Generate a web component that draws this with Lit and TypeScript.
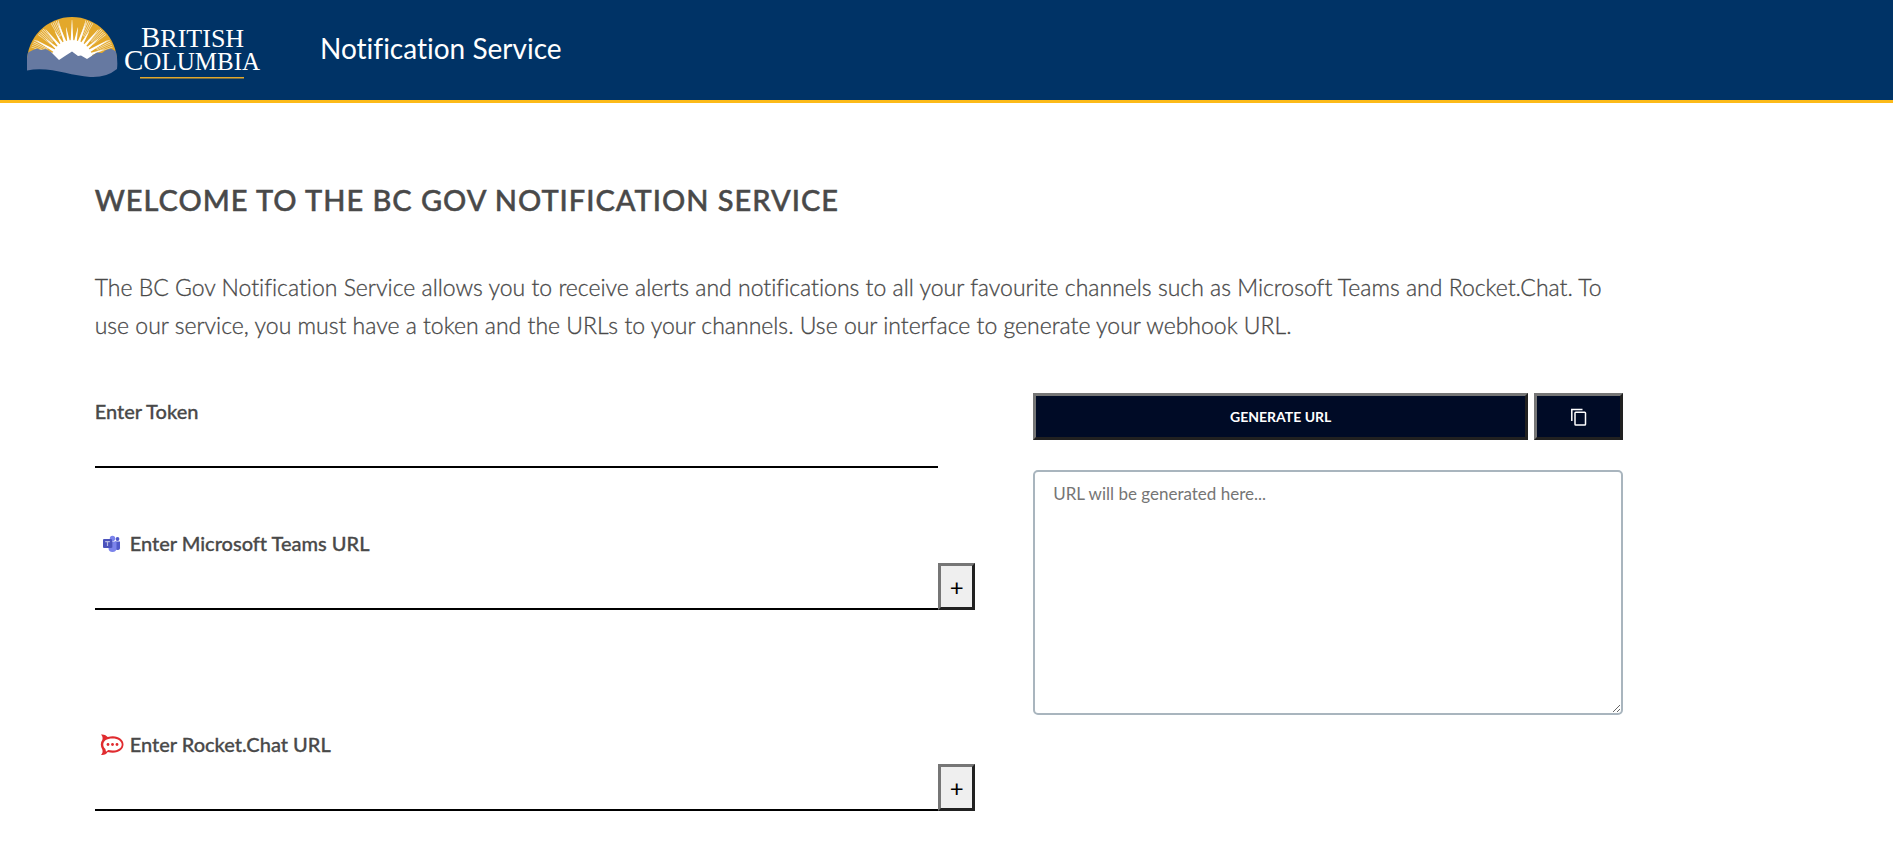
import { LitElement, html, svg, css } from "lit";
import { customElement, property, state } from "lit/decorators.js";

/** Thin wedge between an inner and an outer radius around the sun's centre. */
const wedge = (deg: number, halfInner: number, halfOuter: number, r0: number, r1: number) => {
  const pt = (a: number, r: number) => {
    const t = (a * Math.PI) / 180;
    return `${(72 + r * Math.cos(t)).toFixed(2)} ${(62 - r * Math.sin(t)).toFixed(2)}`;
  };
  return `M${pt(deg - halfInner, r0)}L${pt(deg - halfOuter, r1)}L${pt(deg + halfOuter, r1)}L${pt(deg + halfInner, r0)}Z`;
};

const rays = Array.from({ length: 17 }, (_, i) => 10 + i * 10);
const fans = [24, 43, 66, 114, 137, 156];

@customElement("bc-logo")
export class BcLogo extends LitElement {
  static styles = css`
    :host {
      display: block;
    }
    svg {
      display: block;
    }
    .word {
      font-family: "Liberation Serif", serif;
      font-size: 25px;
      fill: #fff;
    }
    .upper {
      font-size: 26px;
    }
    .initial {
      font-size: 29px;
    }
  `;

  render() {
    return html`
      <svg width="234" height="64" viewBox="27 17 234 64" role="img" aria-label="British Columbia">
        <defs>
          <clipPath id="dome"><path d="M27 63A45 45 0 0 1 117 63Z" /></clipPath>
        </defs>
        <g clip-path="url(#dome)">
          <rect x="27" y="18" width="90" height="45" fill="#e3a82b" />
          <circle cx="72" cy="62" r="21" fill="#fff" />
          ${rays.map((a) => svg`<path d=${wedge(a, 3.8, 0.3, 20, a % 20 ? 41 : 34)} fill="#fff" />`)}
          ${fans.map((a) =>
            [-5, -2.5, 0, 2.5, 5].map(
              (d) => svg`<path d=${wedge(a + d, 0.5, 0.5, 27, 43)} fill="#fff" opacity="0.75" />`
            )
          )}
        </g>
        <path
          fill="#6679a1"
          d="M28 53.500L33 51L37 49.500L41 51L46 50L51 53L59 61L65 57L72 52.500L78 57L81 56.500L87 60L97 53.500L102 54L106 51L111 49.500L116 52.500Q118 62 117 70Q106 79 90 78C70 77 50 67 27 71.500Q26 62 28 53.500Z"
        />
        <text class="word upper" x="141" y="48"><tspan class="initial">B</tspan>RITISH</text>
        <text class="word" x="124" y="71"><tspan class="initial">C</tspan>OLUMBIA</text>
        <rect x="140" y="78" width="104" height="1.500" fill="#e3a82b" />
      </svg>
    `;
  }
}

@customElement("url-field")
export class UrlField extends LitElement {
  @property() label = "";
  @property() icon = "";
  @property({ type: Boolean }) addable = false;

  static styles = css`
    :host {
      display: block;
    }
    .label {
      display: flex;
      align-items: center;
      height: 32px;
      font-size: 20px;
      font-weight: 500;
      -webkit-text-stroke: 0.3px currentColor;
    }
    .icon {
      width: 24px;
      height: 24px;
      margin: 2px 6px 0 5px;
    }
    .row {
      display: grid;
      grid-template-columns: 1fr 37px;
      margin-top: 4px;
    }
    .box {
      box-sizing: border-box;
      width: 100%;
      min-height: 37px;
      padding: 4px 8px;
      border: 0;
      border-bottom: 2px solid #000;
      border-radius: 0;
      background: none;
      font: inherit;
      font-size: 18px;
      outline: none;
    }
    .add {
      box-sizing: border-box;
      height: 47px;
      padding: 0;
      border: 3px solid;
      border-color: #767676 #212121 #212121 #767676;
      background: #efefef;
      color: #000;
      font: inherit;
      font-size: 24px;
      line-height: 24px;
    }
  `;

  private renderIcon() {
    if (this.icon === "teams") {
      return html`<svg class="icon" viewBox="0 0 24 24" aria-hidden="true">
        <circle cx="17.500" cy="7" r="1.900" fill="#5059c9" />
        <path d="M15 9.500h5v5.500a2.500 2.500 0 0 1-5 1z" fill="#5059c9" />
        <circle cx="12.500" cy="6.500" r="2.700" fill="#7b83eb" />
        <path d="M8.500 9.500h8v6.500a4 4 0 0 1-8 0z" fill="#7b83eb" />
        <path d="M8.500 9.500h4v6h-4z" fill="#5a62c3" />
        <rect x="3" y="7" width="9" height="9" rx="1" fill="#4b53bc" />
        <path d="M5.200 9h4.600v1.200H8.100V14H6.900v-3.800H5.200z" fill="#fff" opacity="0.600" />
      </svg>`;
    }
    if (this.icon === "rocket") {
      return html`<svg class="icon" viewBox="0 0 24 24" aria-hidden="true">
        <path
          d="M1 1.500C4 1 6.500 2.500 7.700 4C17 1.500 23.500 6 23.500 11.500S17 21.500 7.700 19C6.500 21 4 22.500 1 22C2.500 20.500 3 18.500 2.300 16.500C.300 13.500 .300 9.500 2.300 7C3 5 2.500 3 1 1.500Z"
          fill="#e02b2f"
        />
        <path
          d="M12.500 5.400C18 5.400 21.700 8 21.700 11.500S18 17.600 12.500 17.600C11 17.600 9.500 17.400 8.300 17.100L6 18.700L5.400 16C2.600 13.600 2.600 9.400 5.400 7.200C7.200 5.900 9.700 5.400 12.500 5.400Z"
          fill="#fff"
        />
        <circle cx="8" cy="11.500" r="1.400" fill="#e02b2f" />
        <circle cx="12.500" cy="11.500" r="1.400" fill="#e02b2f" />
        <circle cx="17" cy="11.500" r="1.400" fill="#e02b2f" />
      </svg>`;
    }
    return null;
  }

  render() {
    return html`
      <label class="label" for="box">${this.renderIcon()}${this.label}</label>
      <div class="row">
        <input class="box" id="box" type="text" />
        ${this.addable ? html`<button class="add" type="button" aria-label="Add another URL">+</button>` : null}
      </div>
    `;
  }
}

@customElement("app-root")
export class AppRoot extends LitElement {
  @state() private url = "";

  static styles = css`
    :host {
      display: block;
      font-family: Lato, sans-serif;
      font-variant-ligatures: none;
      color: #494949;
      background: #fff;
    }
    .header {
      display: flex;
      align-items: center;
      box-sizing: border-box;
      height: 103px;
      padding: 0 27px 4px;
      gap: 59px;
      background: #036;
      border-bottom: 3px solid #fcba19;
      color: #fff;
    }
    .title {
      font-size: 28px;
      line-height: 32px;
    }
    .main {
      width: 85%;
    }
    .page {
      padding: 75px 0 0 5%;
    }
    .heading {
      margin: 0;
      font-size: 29px;
      line-height: 44px;
      font-weight: 500;
      letter-spacing: 1px;
      -webkit-text-stroke: 0.5px currentColor;
    }
    .intro {
      margin: 46px 0 49px;
      font-size: 23px;
      line-height: 38px;
      font-weight: 300;
      -webkit-text-stroke: 0.3px currentColor;
    }
    .columns {
      display: grid;
      grid-template-columns: 57.6% 38.6%;
      justify-content: space-between;
      align-items: start;
    }
    .fields {
      display: grid;
      padding-top: 2px;
    }
    .token {
      margin-bottom: 59px;
    }
    .teams {
      margin-bottom: 118px;
    }
    .actions {
      display: grid;
      grid-template-columns: 1fr 89px;
      gap: 6px;
    }
    .action {
      display: flex;
      align-items: center;
      justify-content: center;
      box-sizing: border-box;
      height: 47px;
      padding: 0;
      border: 3px solid;
      border-color: #767676 #212121 #212121 #767676;
      background: #000b26;
      color: #fff;
      font: inherit;
      font-size: 14px;
      font-weight: 700;
    }
    .output {
      display: block;
      box-sizing: border-box;
      width: 100%;
      height: 245px;
      margin-top: 30px;
      padding: 10px 18px;
      border: 2px solid #a9b5be;
      border-radius: 5px;
      color: #494949;
      font: inherit;
      font-size: 17px;
      line-height: 24px;
    }
    .output::placeholder {
      color: #757575;
    }
  `;

  render() {
    return html`
      <header class="header">
        <bc-logo></bc-logo>
        <div class="title">Notification Service</div>
      </header>
      <div class="page">
        <main class="main">
          <h1 class="heading">WELCOME TO THE BC GOV NOTIFICATION SERVICE</h1>
          <p class="intro">
            The BC Gov Notification Service allows you to receive alerts and notifications to all your favourite
            channels such as Microsoft Teams and Rocket.Chat. To use our service, you must have a token and the URLs to
            your channels. Use our interface to generate your webhook URL.
          </p>
          <div class="columns">
            <div class="fields">
              <url-field class="token" label="Enter Token"></url-field>
              <url-field class="teams" label="Enter Microsoft Teams URL" icon="teams" addable></url-field>
              <url-field label="Enter Rocket.Chat URL" icon="rocket" addable></url-field>
            </div>
            <div>
              <div class="actions">
                <button class="action" type="button">GENERATE URL</button>
                <button class="action" type="button" aria-label="Copy URL">
                  <svg width="20" height="20" viewBox="0 0 20 20" fill="none" stroke="#fff" stroke-width="1.500" aria-hidden="true">
                    <path d="M2.800 14V2.500H13.500" />
                    <rect x="6" y="5.300" width="10.500" height="12.700" rx="0.800" />
                  </svg>
                </button>
              </div>
              <textarea
                class="output"
                aria-label="Generated URL"
                placeholder="URL will be generated here..."
                .value=${this.url}
              ></textarea>
            </div>
          </div>
        </main>
      </div>
    `;
  }
}
